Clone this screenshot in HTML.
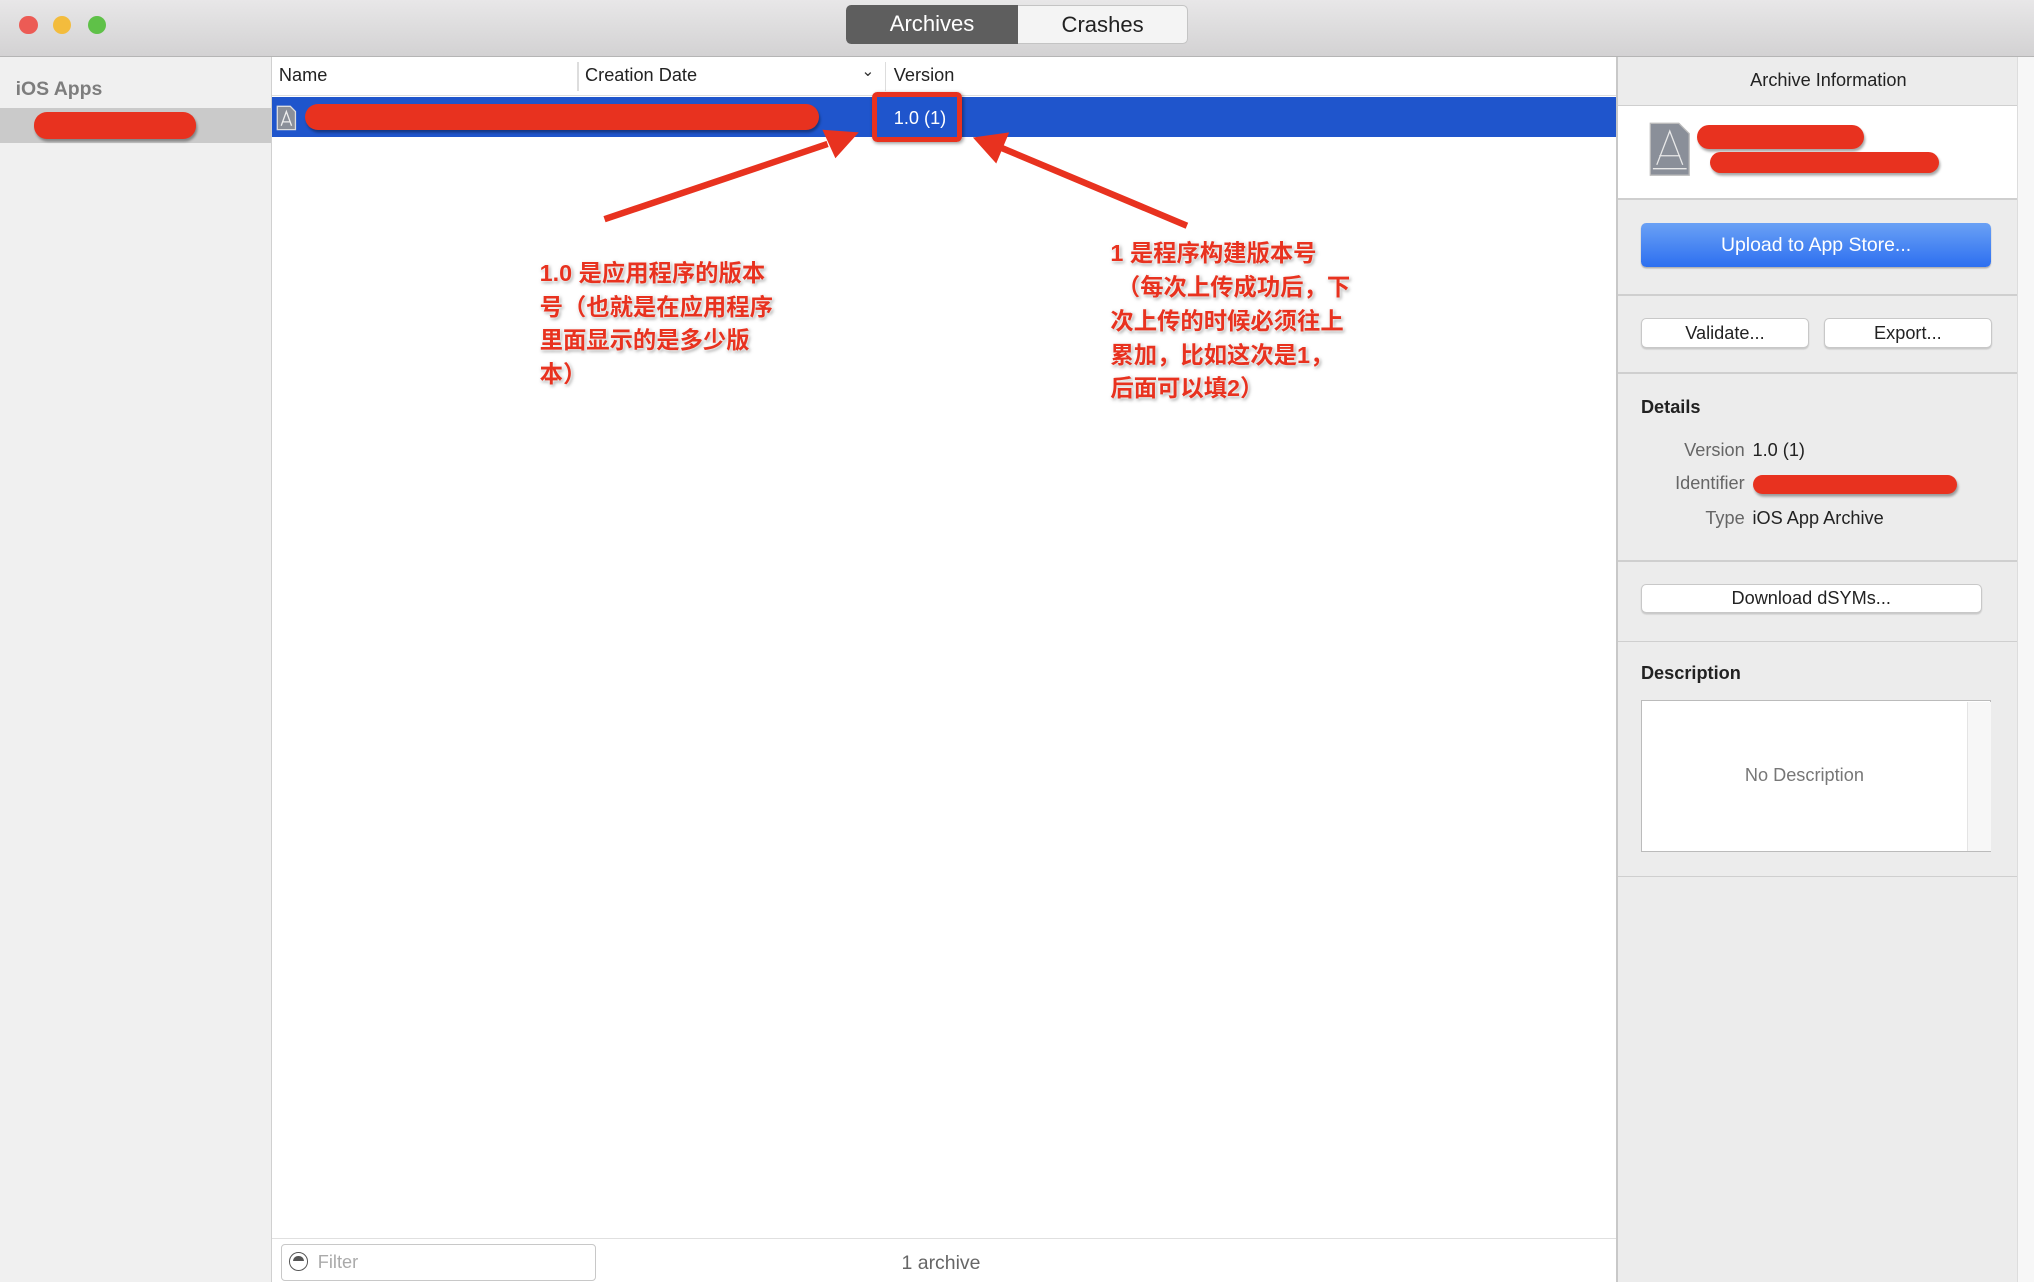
<!DOCTYPE html>
<html><head><meta charset="utf-8"><style>
html,body{margin:0;padding:0;overflow:hidden}
body{width:2034px;height:1282px;background:#fff;font-family:"Liberation Sans","Noto Sans CJK SC",sans-serif}
#w{position:relative;width:1568px;height:988px;zoom:1.29719;overflow:hidden}
.a{position:absolute}
.red{background:#e8321f;border-radius:10px;box-shadow:1px 2px 2px rgba(0,0,0,.35)}
.btn{position:absolute;background:#fff;border:1px solid #c8c8c8;border-radius:4px;box-shadow:0 1px 1px rgba(0,0,0,.15);text-align:center;font-size:14px;color:#222}
.sep{position:absolute;left:1247px;width:308px;height:1px;background:#cfcfcf}
.note{position:absolute;color:#e8321f;font-weight:bold;font-size:18px;line-height:26px;text-shadow:0 0 2px #fff,0 0 3px #fff,1px 1px 3px rgba(0,0,0,.5);white-space:nowrap}
</style></head><body><div id="w">
<!-- title bar -->
<div class="a" style="left:0;top:0;width:1568px;height:43px;background:linear-gradient(#e8e7e8,#d3d2d3);border-bottom:1px solid #b5b5b5"></div>
<div class="a" style="left:15px;top:12px;width:14px;height:14px;border-radius:50%;background:#ec5b55"></div>
<div class="a" style="left:41px;top:12px;width:14px;height:14px;border-radius:50%;background:#f3bc3d"></div>
<div class="a" style="left:68px;top:12px;width:14px;height:14px;border-radius:50%;background:#5fc148"></div>
<div class="a" style="left:652px;top:4px;width:133px;height:30px;background:#5e5e5e;border-radius:4px 0 0 4px;color:#fff;font-size:17px;line-height:30px;text-align:center">Archives</div>
<div class="a" style="left:785px;top:4px;width:130px;height:28px;background:#f4f4f4;border:1px solid #c4c4c4;border-left:none;border-radius:0 4px 4px 0;color:#222;font-size:17px;line-height:29px;text-align:center">Crashes</div>
<!-- sidebar -->
<div class="a" style="left:0;top:44px;width:209px;height:944px;background:#f0f0f0;border-right:1px solid #d0d0d0"></div>
<div class="a" style="left:12px;top:60px;font-size:15px;font-weight:bold;color:#7d7d7d">iOS Apps</div>
<div class="a" style="left:0;top:83px;width:209px;height:27px;background:#cacaca"></div>
<div class="a red" style="left:26px;top:86px;width:125px;height:21px"></div>
<!-- table header -->
<div class="a" style="left:210px;top:44px;width:1036px;height:29px;background:#fff;border-bottom:1px solid #ddd"></div>
<div class="a" style="left:215px;top:50px;font-size:14px;color:#222">Name</div>
<div class="a" style="left:445px;top:48px;width:1px;height:22px;background:#ddd"></div>
<div class="a" style="left:451px;top:50px;font-size:14px;color:#222">Creation Date</div>
<div class="a" style="left:664px;top:48px;font-size:12px;color:#333">&#8964;</div>
<div class="a" style="left:682px;top:48px;width:1px;height:22px;background:#ddd"></div>
<div class="a" style="left:689px;top:50px;font-size:14px;color:#222">Version</div>
<!-- selected row -->
<div class="a" style="left:210px;top:75px;width:1036px;height:31px;background:#1f55cc"></div>
<svg class="a" style="left:213px;top:81px" width="16" height="20"><path d="M1 1h10l4 4v14H1z" fill="#8a8f99" stroke="#ddd"/><path d="M4 16l4-11 4 11M5 13h6" stroke="#eee" fill="none"/></svg>
<div class="a red" style="left:235px;top:80px;width:396px;height:20px"></div>
<div class="a" style="left:689px;top:83px;font-size:14px;color:#fff">1.0 (1)</div>
<div class="a" style="left:672px;top:71px;width:62px;height:31px;border:4px solid #e8321f;border-radius:4px;box-shadow:1px 1px 3px rgba(0,0,0,.4)"></div>
<!-- arrows -->
<svg class="a" style="left:0;top:0" width="1568" height="988">
<g fill="#e8321f" stroke="#e8321f" stroke-width="5">
<line x1="466" y1="169" x2="638" y2="111"/>
<line x1="915" y1="174" x2="772" y2="114"/>
</g>
<polygon points="662,102 634,100 644,122" fill="#e8321f"/>
<polygon points="750,106 778,102 768,126" fill="#e8321f"/>
</svg>
<div class="note" style="left:416px;top:198px">1.0 是应用程序的版本<br>号（也就是在应用程序<br>里面显示的是多少版<br>本）</div>
<div class="note" style="left:856px;top:183px">1 是程序构建版本号<br>&nbsp;（每次上传成功后，下<br>次上传的时候必须往上<br>累加，比如这次是1，<br>后面可以填2）</div>
<!-- bottom bar -->
<div class="a" style="left:210px;top:954px;width:1036px;height:1px;background:#e0e0e0"></div>
<div class="a" style="left:217px;top:959px;width:241px;height:27px;border:1px solid #c8c8c8;border-radius:3px;background:#fff"></div>
<div class="a" style="left:223px;top:965px;width:13px;height:13px;border:1.5px solid #555;border-radius:50%"></div>
<div class="a" style="left:226px;top:968px;width:8px;height:4px;background:#555;border-radius:4px 4px 0 0"></div>
<div class="a" style="left:245px;top:965px;font-size:14px;color:#aaa">Filter</div>
<div class="a" style="left:695px;top:965px;font-size:15px;color:#666">1 archive</div>
<!-- right panel -->
<div class="a" style="left:1246px;top:44px;width:1px;height:944px;background:#c8c8c8"></div>
<div class="a" style="left:1247px;top:44px;width:308px;height:944px;background:#ececec"></div>
<div class="a" style="left:1555px;top:44px;width:13px;height:944px;background:#f7f7f7;border-left:1px solid #ddd"></div>
<div class="a" style="left:1247px;top:54px;width:325px;text-align:center;font-size:14px;color:#222">Archive Information</div>
<div class="sep" style="top:81px"></div>
<div class="a" style="left:1247px;top:82px;width:308px;height:71px;background:#fff"></div>
<svg class="a" style="left:1271px;top:94px" width="32" height="42"><path d="M1 1h22l8 8v32H1z" fill="#8a8f99" stroke="#bbb"/><path d="M6 33l10-26 10 26M8 26h16M3 36h26" stroke="#e8e8e8" fill="none"/></svg>
<div class="a red" style="left:1308px;top:96px;width:129px;height:19px"></div>
<div class="a red" style="left:1318px;top:117px;width:177px;height:16px"></div>
<div class="sep" style="top:153px"></div>
<div class="a" style="left:1265px;top:172px;width:270px;height:34px;border-radius:4px;background:linear-gradient(#6aa1f5,#2d6ff0);box-shadow:0 1px 1px rgba(0,0,0,.25);color:#fff;font-size:15px;line-height:34px;text-align:center">Upload to App Store...</div>
<div class="sep" style="top:227px"></div>
<div class="btn" style="left:1265px;top:245px;width:128px;height:22px;line-height:22px">Validate...</div>
<div class="btn" style="left:1406px;top:245px;width:128px;height:22px;line-height:22px">Export...</div>
<div class="sep" style="top:287px"></div>
<div class="a" style="left:1265px;top:306px;font-size:14px;font-weight:bold;color:#222">Details</div>
<div class="a" style="left:1247px;top:339px;width:98px;text-align:right;font-size:14px;color:#666">Version</div>
<div class="a" style="left:1351px;top:339px;font-size:14px;color:#222">1.0 (1)</div>
<div class="a" style="left:1247px;top:365px;width:98px;text-align:right;font-size:14px;color:#666">Identifier</div>
<div class="a red" style="left:1351px;top:366px;width:158px;height:15px"></div>
<div class="a" style="left:1247px;top:392px;width:98px;text-align:right;font-size:14px;color:#666">Type</div>
<div class="a" style="left:1351px;top:392px;font-size:14px;color:#222">iOS App Archive</div>
<div class="sep" style="top:432px"></div>
<div class="btn" style="left:1265px;top:450px;width:261px;height:21px;line-height:21px">Download dSYMs...</div>
<div class="sep" style="top:494px"></div>
<div class="a" style="left:1265px;top:511px;font-size:14px;font-weight:bold;color:#222">Description</div>
<div class="a" style="left:1265px;top:540px;width:268px;height:115px;border:1px solid #bbb;background:#fff"></div>
<div class="a" style="left:1516px;top:541px;width:18px;height:115px;background:#f7f7f7;border-left:1px solid #e4e4e4"></div>
<div class="a" style="left:1266px;top:590px;width:250px;text-align:center;font-size:14px;color:#777">No Description</div>
<div class="sep" style="top:675px"></div>
</div></body></html>
